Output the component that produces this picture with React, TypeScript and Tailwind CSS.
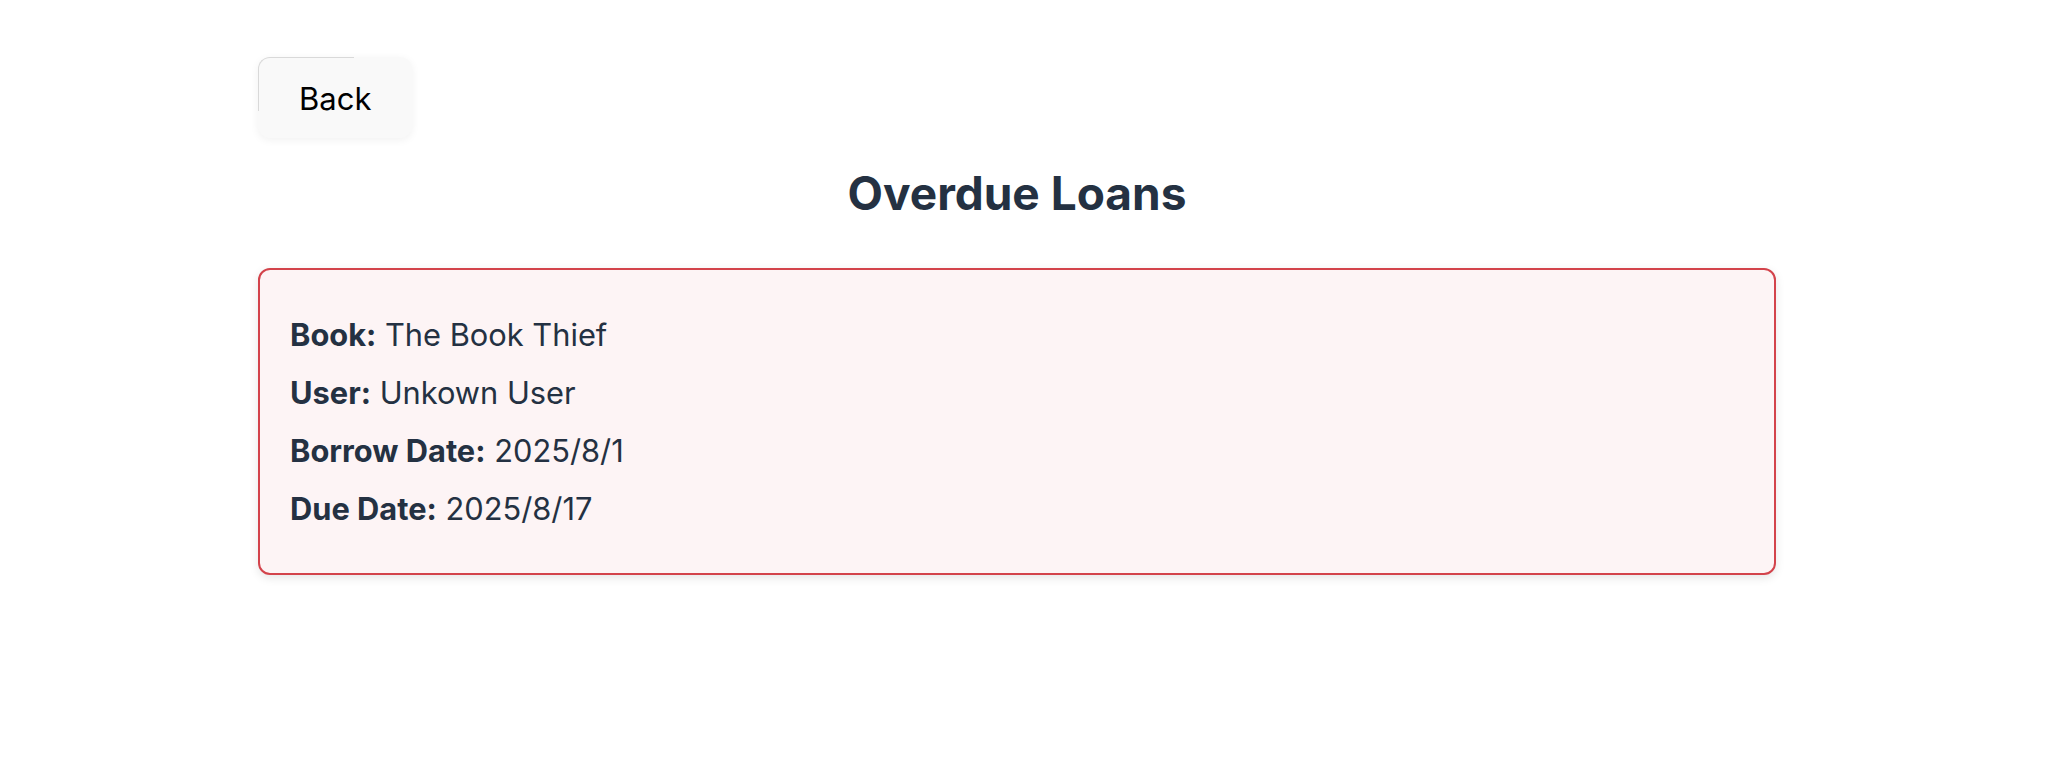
export default function App() {
  const rows = [
    { label: 'Book:', value: 'The Book Thief' },
    { label: 'User:', value: 'Unkown User' },
    { label: 'Borrow Date:', value: '2025/8/1' },
    { label: 'Due Date:', value: '2025/8/17' },
  ]

  return (
    <div className="min-h-screen bg-white font-['Inter',sans-serif] text-[#243142]">
      <div className="ml-[258px] w-[1518px] pt-[57px]">
        <button className="relative h-[81px] px-[41px] pt-[3px] rounded-xl bg-[#f9f9f9] text-[31px] text-black shadow-[0_2px_8px_rgba(0,0,0,0.06)]">
          <span className="absolute left-0 top-0 w-[96px] h-[54px] rounded-tl-xl border-t border-l border-[#d9d9d9]"></span>
          Back
        </button>
        <h2 className="mt-[28px] text-center text-[46px] leading-[54px] font-bold">Overdue Loans</h2>
        <div className="mt-[48px] rounded-xl border-2 border-[#d3434b] bg-[#fdf4f5] px-[30px] pt-[41px] pb-[40px] shadow-[0_3px_10px_rgba(0,0,0,0.1)] flex flex-col gap-[10px]">
          {rows.map((r) => (
            <p key={r.label} className="text-[30.8px] leading-[48px]">
              <span className="font-bold">{r.label}</span> {r.value}
            </p>
          ))}
        </div>
      </div>
    </div>
  )
}
